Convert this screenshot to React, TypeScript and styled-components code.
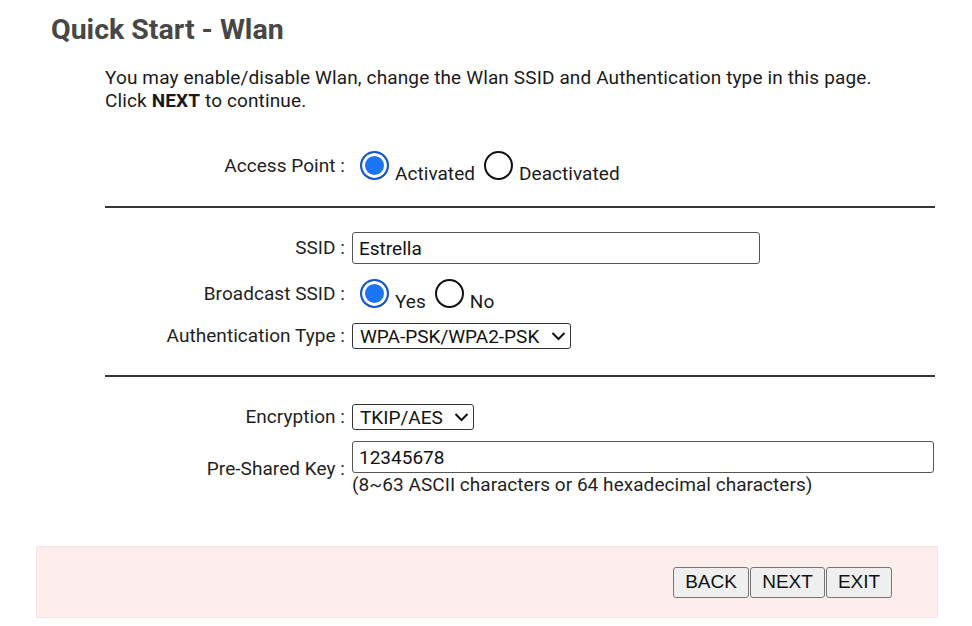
import React, { useState } from 'react';
import styled, { createGlobalStyle } from 'styled-components';

const GlobalStyle = createGlobalStyle`
  html, body {
    margin: 0;
    padding: 0;
    background: #ffffff;
  }
  body {
    font-family: Roboto, "Liberation Sans", Arial, sans-serif;
    color: #1a1a1a;
  }
`;

const Page = styled.div`
  width: 972px;
  height: 626px;
  overflow: hidden;
  display: flex;
  flex-direction: column;
`;

const Title = styled.h1`
  margin: 12px 0 0 51px;
  font-size: 28.5px;
  font-weight: 700;
  color: #474747;
  line-height: 36px;
`;

const Intro = styled.p`
  margin: 18px 0 0 105px;
  font-size: 19px;
  line-height: 23px;
  letter-spacing: 0.13px;
  color: #1a1a1a;
`;

const Form = styled.div`
  margin: 39px 37px 0 105px;
  display: flex;
  flex-direction: column;
`;

const Section = styled.div<{ $gap: number }>`
  display: grid;
  grid-template-columns: 240px 1fr;
  column-gap: 7px;
  row-gap: ${({ $gap }) => $gap}px;
  align-items: center;
`;

const Divider = styled.div<{ $top: number; $bottom: number }>`
  height: 2px;
  background: #353535;
  margin: ${({ $top, $bottom }) => `${$top}px 0 ${$bottom}px`};
`;

const Label = styled.div`
  text-align: right;
  font-size: 19px;
  line-height: 22px;
  letter-spacing: 0.05px;
  white-space: nowrap;
  color: #1f1f1f;
`;

const Field = styled.div`
  display: flex;
  flex-direction: column;
  align-items: flex-start;
`;

const RadioGroup = styled.div`
  display: flex;
  align-items: flex-end;
  padding-left: 8px;
  margin-bottom: -3px;
`;

const RadioOption = styled.label`
  display: inline-flex;
  align-items: flex-end;
  gap: 6px;
  margin-right: 9px;
  font-size: 19px;
  line-height: 19px;
  letter-spacing: 0.05px;
  cursor: pointer;
`;

const RadioInput = styled.input`
  appearance: none;
  margin: 0 0 3px;
  width: 29px;
  height: 29px;
  border-radius: 50%;
  border: 2px solid #111;
  background: #fff;
  cursor: pointer;

  &:checked {
    border-color: #1753c9;
    box-shadow: inset 0 0 0 3px #fff;
    background: #1b74f2;
  }
`;

const TextInput = styled.input<{ $width: number }>`
  box-sizing: border-box;
  width: ${({ $width }) => $width}px;
  height: 32px;
  border: 1px solid #555;
  border-radius: 3px;
  padding: 0 6px;
  font-family: Roboto, "Liberation Sans", Arial, sans-serif;
  font-size: 19px;
  color: #111;
  outline: none;
`;

const SelectWrap = styled.div`
  position: relative;
  display: inline-flex;
`;

const Select = styled.select<{ $width: number }>`
  appearance: none;
  box-sizing: border-box;
  width: ${({ $width }) => $width}px;
  height: 26px;
  border: 1px solid #333;
  border-radius: 3px;
  background: #fff;
  padding: 0 0 0 7px;
  font-family: Roboto, "Liberation Sans", Arial, sans-serif;
  font-size: 19px;
  color: #111;
  outline: none;
`;

const Chevron = styled.svg`
  position: absolute;
  right: 5px;
  top: 8px;
  pointer-events: none;
`;

const Hint = styled.div`
  font-size: 19px;
  line-height: 23px;
  letter-spacing: 0.05px;
  color: #1f1f1f;
`;

const Footer = styled.div`
  margin: 50px 0 0 36px;
  width: 902px;
  height: 72px;
  box-sizing: border-box;
  background: #fdeded;
  border: 1px solid #f9e4e4;
  display: flex;
  justify-content: flex-end;
  align-items: center;
  padding-right: 45px;
  gap: 1px;
`;

const Button = styled.button<{ $width: number }>`
  width: ${({ $width }) => $width}px;
  height: 31px;
  background: #efefef;
  border: 1px solid #767676;
  border-radius: 3px;
  font-family: "Liberation Sans", Arial, sans-serif;
  font-size: 19px;
  color: #111;
  padding: 0;
  cursor: pointer;
`;

const ChevronIcon = () => (
  <Chevron width="15" height="10" viewBox="0 0 15 10">
    <path d="M1.5 2 L7.5 8 L13.5 2" fill="none" stroke="#111" strokeWidth="2" />
  </Chevron>
);

interface RadioPairProps {
  name: string;
  options: string[];
  value: string;
  onChange: (v: string) => void;
}

const RadioPair: React.FC<RadioPairProps> = ({ name, options, value, onChange }) => (
  <RadioGroup>
    {options.map((opt) => (
      <RadioOption key={opt}>
        <RadioInput
          type="radio"
          name={name}
          checked={value === opt}
          onChange={() => onChange(opt)}
        />
        {opt}
      </RadioOption>
    ))}
  </RadioGroup>
);

const App: React.FC = () => {
  const [ap, setAp] = useState('Activated');
  const [broadcast, setBroadcast] = useState('Yes');
  const [ssid, setSsid] = useState('Estrella');
  const [auth, setAuth] = useState('WPA-PSK/WPA2-PSK');
  const [enc, setEnc] = useState('TKIP/AES');
  const [key, setKey] = useState('12345678');

  return (
    <Page>
      <GlobalStyle />
      <Title>Quick Start - Wlan</Title>
      <Intro>
        You may enable/disable Wlan, change the Wlan SSID and Authentication type in this page.
        <br />
        Click <b>NEXT</b> to continue.
      </Intro>

      <Form>
        <Section $gap={0}>
          <Label>Access Point :</Label>
          <RadioPair
            name="ap"
            options={['Activated', 'Deactivated']}
            value={ap}
            onChange={setAp}
          />
        </Section>

        <Divider $top={26} $bottom={24} />

        <Section $gap={15}>
          <Label>SSID :</Label>
          <Field>
            <TextInput $width={408} value={ssid} onChange={(e) => setSsid(e.target.value)} />
          </Field>

          <Label>Broadcast SSID :</Label>
          <RadioPair
            name="broadcast"
            options={['Yes', 'No']}
            value={broadcast}
            onChange={setBroadcast}
          />

          <Label>Authentication Type :</Label>
          <Field>
            <SelectWrap>
              <Select $width={219} value={auth} onChange={(e) => setAuth(e.target.value)}>
                <option>WPA-PSK/WPA2-PSK</option>
                <option>WPA2-PSK</option>
                <option>WEP</option>
              </Select>
              <ChevronIcon />
            </SelectWrap>
          </Field>
        </Section>

        <Divider $top={26} $bottom={27} />

        <Section $gap={11}>
          <Label>Encryption :</Label>
          <Field>
            <SelectWrap>
              <Select $width={122} value={enc} onChange={(e) => setEnc(e.target.value)}>
                <option>TKIP/AES</option>
                <option>AES</option>
              </Select>
              <ChevronIcon />
            </SelectWrap>
          </Field>

          <Label>Pre-Shared Key :</Label>
          <Field>
            <TextInput $width={582} value={key} onChange={(e) => setKey(e.target.value)} />
            <Hint>(8~63 ASCII characters or 64 hexadecimal characters)</Hint>
          </Field>
        </Section>
      </Form>

      <Footer>
        <Button $width={76}>BACK</Button>
        <Button $width={75}>NEXT</Button>
        <Button $width={66}>EXIT</Button>
      </Footer>
    </Page>
  );
};

export default App;
